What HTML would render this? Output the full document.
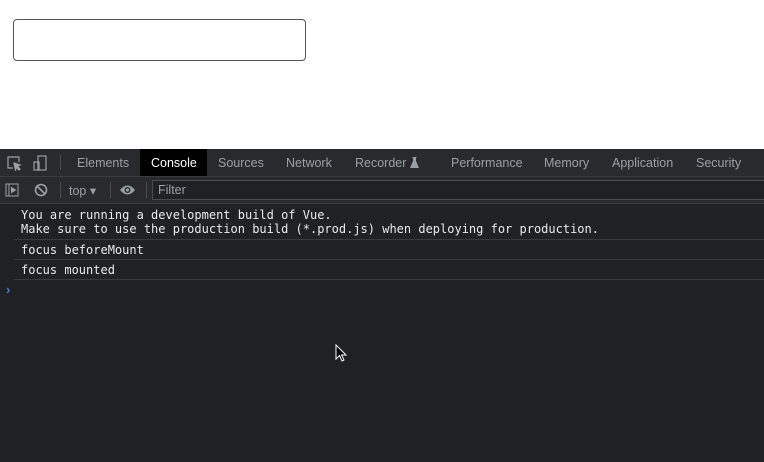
<!DOCTYPE html>
<html><head><style>
body{margin:0;width:764px;height:462px;overflow:hidden;background:#fff;font-family:"Liberation Sans",sans-serif;position:relative}
.inp{position:absolute;left:13px;top:19px;border:1px solid #555;border-radius:4px;box-sizing:border-box;width:293px;height:42px}
.dt{position:absolute;left:0;top:149px;width:764px;height:313px;background:#202124}
.tabs{position:absolute;left:0;top:0;width:764px;height:27px;background:#292a2d;border-bottom:1px solid #3c3d40;font-size:12.5px;color:#9aa0a6}
.tabs span{position:absolute;top:7px}
.tb{position:absolute;left:0;top:28px;width:764px;height:26px;background:#292a2d;border-bottom:1px solid #3c3d40;font-size:12.5px;color:#9aa0a6}
.mono{font-family:"DejaVu Sans Mono","Liberation Mono",monospace;font-size:12px;color:#e8eaed;position:absolute;left:21px;line-height:14px}
.line{position:absolute;left:14px;width:750px;height:1px;background:#3a3b3e}
</style></head><body>
<div class="inp"></div>
<div class="dt">
<div class="tabs">
<svg style="position:absolute;left:6px;top:6px" width="16" height="16" viewBox="0 0 16 16" fill="none" stroke="#9aa0a6" stroke-width="1.2"><path d="M7 13H2V2h11v5"/><path d="M8 8l6 2-2.5 1L14 14l-1 1-2.5-2.5L9.5 15z" fill="#9aa0a6"/></svg>
<svg style="position:absolute;left:32px;top:6px" width="16" height="16" viewBox="0 0 16 16" fill="none" stroke="#9aa0a6" stroke-width="1.2"><rect x="6" y="1" width="8" height="14"/><rect x="2" y="7" width="5" height="8"/></svg>
<div style="position:absolute;left:60px;top:6px;width:1px;height:15px;background:#4a4b4e"></div>
<span style="left:77px">Elements</span>
<div style="position:absolute;left:140px;top:0;width:67px;height:27px;background:#000"></div>
<span style="left:151px;color:#fff">Console</span>
<span style="left:218px">Sources</span>
<span style="left:286px">Network</span>
<span style="left:355px">Recorder</span>
<svg style="position:absolute;left:410px;top:8px" width="9" height="11" viewBox="0 0 9 11"><path d="M2.5 0h4v1H6v3l3 7H0l3-7V1h-.5z" fill="#9aa0a6"/></svg>
<span style="left:451px">Performance</span>
<span style="left:544px">Memory</span>
<span style="left:612px">Application</span>
<span style="left:696px">Security</span>
</div>
<div class="tb">
<svg style="position:absolute;left:5px;top:6px" width="14" height="14" viewBox="0 0 14 14" fill="none" stroke="#9aa0a6"><rect x="1" y="1" width="12" height="12"/><path d="M4 1v12"/><path d="M6.5 4.5l4 2.5-4 2.5z" fill="#9aa0a6"/></svg>
<svg style="position:absolute;left:34px;top:6px" width="14" height="14" viewBox="0 0 14 14" fill="none" stroke="#9aa0a6" stroke-width="1.6"><circle cx="7" cy="7" r="5.5"/><path d="M3 3l8 8"/></svg>
<div style="position:absolute;left:60px;top:5px;width:1px;height:16px;background:#4a4b4e"></div>
<span style="position:absolute;left:69px;top:6px">top ▾</span>
<div style="position:absolute;left:110px;top:5px;width:1px;height:16px;background:#4a4b4e"></div>
<svg style="position:absolute;left:119px;top:7px" width="17" height="12" viewBox="0 0 17 12"><path d="M1 6Q8.5-3 16 6Q8.5 15 1 6z" fill="#9aa0a6"/><circle cx="8.5" cy="6" r="3" fill="#292a2d"/><circle cx="8.5" cy="6" r="1.6" fill="#9aa0a6"/></svg>
<div style="position:absolute;left:146px;top:5px;width:1px;height:16px;background:#4a4b4e"></div>
<div style="position:absolute;left:152px;top:3px;width:612px;height:20px;background:#202124;border:1px solid #4a4b4e;border-right:none;box-sizing:border-box"></div>
<span style="position:absolute;left:158px;top:6px">Filter</span>
</div>
<div class="mono" style="top:59px">You are running a development build of Vue.<br>Make sure to use the production build (*.prod.js) when deploying for production.</div>
<div class="line" style="top:90px"></div>
<div class="mono" style="top:94px">focus beforeMount</div>
<div class="line" style="top:110px"></div>
<div class="mono" style="top:114px">focus mounted</div>
<div class="line" style="top:130px"></div>
<div style="position:absolute;left:6px;top:133px;color:#4b7ad8;font-size:13px;font-weight:bold">›</div>
</div>
<svg style="position:absolute;left:335px;top:344px" width="12" height="18" viewBox="0 0 12 18"><path d="M1 1v14l3.5-3.5 2.5 5.5 2-1-2.5-5H11z" fill="#000" stroke="#fff" stroke-width="1"/></svg>
</body></html>
